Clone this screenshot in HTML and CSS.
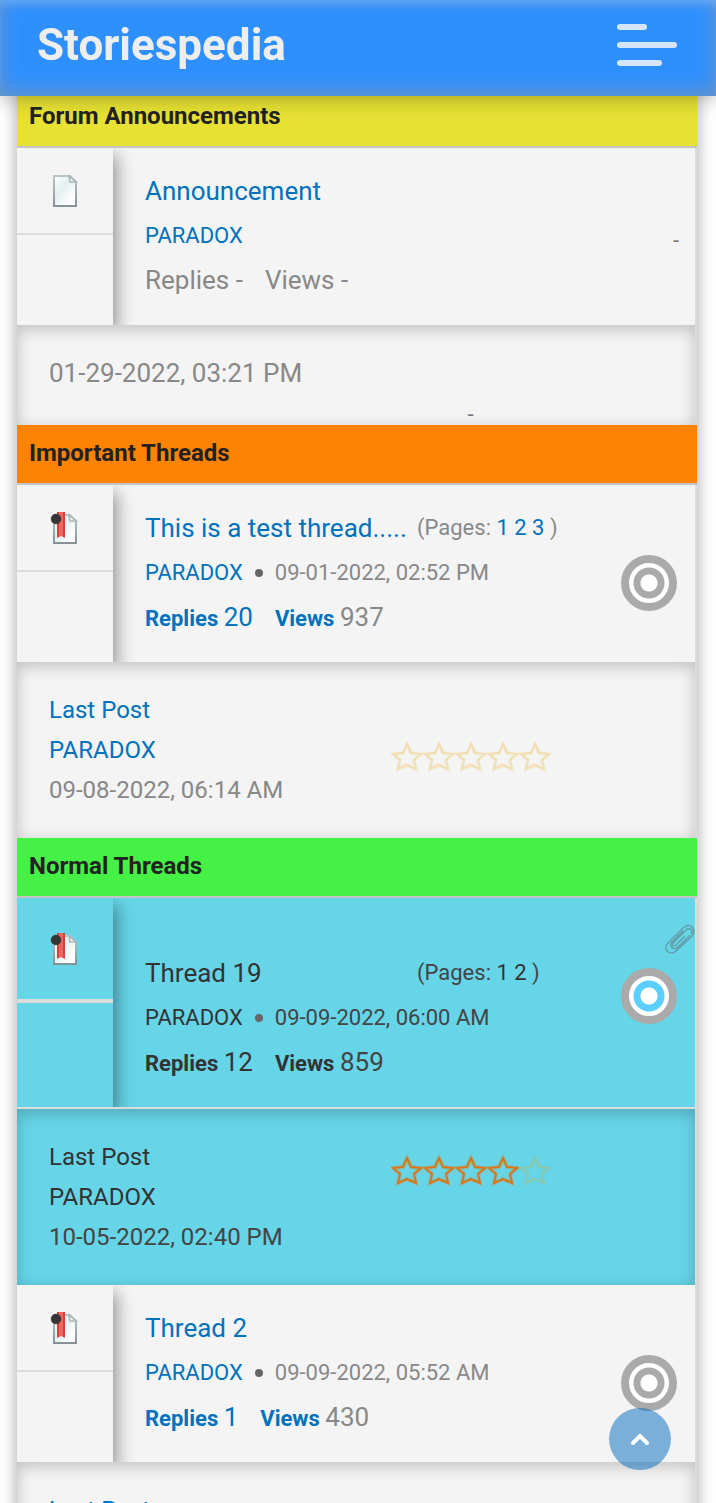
FILE: index.html
```html
<!DOCTYPE html>
<html lang="en">
<head>
    <meta charset="utf-8">
    <meta name="viewport" content="width=device-width, initial-scale=1">
    <title>Storiespedia</title>
    <link rel="stylesheet" href="styles.css">
</head>
<body>
    <svg class="sprites" aria-hidden="true">
        <defs>
            <linearGradient id="paper" x1="0" y1="0" x2="1" y2="1">
                <stop offset="0" stop-color="#ffffff"/>
                <stop offset=".4" stop-color="#e4eff0"/>
                <stop offset=".8" stop-color="#ffffff"/>
            </linearGradient>
            <linearGradient id="edge" x1="0" y1="0" x2="0" y2="1">
                <stop offset="0" stop-color="#b9c6c7"/>
                <stop offset="1" stop-color="#849496"/>
            </linearGradient>
            <symbol id="page" viewBox="0 0 32 32">
                <path d="M5 1H21L27 7V31H5Z" fill="url(#paper)" stroke="url(#edge)" stroke-width="2"/>
                <path d="M20 1L21 7H27Z" fill="#f4f8f8" stroke="#a9b7b8" stroke-width="1.6"/>
            </symbol>
            <symbol id="page-marked" viewBox="0 0 32 32">
                <path d="M5 3H21L27 9V31H5Z" fill="url(#paper)" stroke="url(#edge)" stroke-width="2"/>
                <path d="M20 3L21 9H27Z" fill="#f4f8f8" stroke="#a9b7b8" stroke-width="1.6"/>
                <path d="M8 0H16V26L12 24L8 26Z" fill="#ea6661"/>
                <path d="M9 0V25M15 0V25" stroke="#d5423e" stroke-width="2"/>
                <circle cx="7" cy="7" r="5" fill="#353535" stroke="#353535" stroke-opacity=".4"/>
            </symbol>
            <symbol id="star" viewBox="0 0 32 32">
                <path d="M16 3L20 12L30 13L23 19L25 28L16 24L7 28L9 19L2 13L12 12Z" fill="none" stroke="currentColor" stroke-width="4" stroke-opacity=".3"/>
                <path d="M16 3L20 12L30 13L23 19L25 28L16 24L7 28L9 19L2 13L12 12Z" fill="none" stroke="currentColor" stroke-width="2"/>
            </symbol>
            <symbol id="clip" viewBox="0 0 32 32">
                <path d="M20 8L9 19C5 23 11 28 15 24L27 12M22 13L13 22C11 24 8 22 10 20L23 7C26 4 31 7 28 11M20 5L5 20C-1 26 7 34 13 28L29 13C34 6 27-1 20 5Z" fill="none" stroke="currentColor" stroke-width="1.4"/>
            </symbol>
        </defs>
    </svg>

    <header class="header">
        <a class="logo" href="#">Storiespedia</a>
        <button class="menu-btn" type="button" aria-label="Menu">
            <span class="bar short"></span>
            <span class="bar"></span>
            <span class="bar medium"></span>
        </button>
    </header>

    <main class="forum">
        <h2 class="section-title announcements">Forum Announcements</h2>
        <article class="thread">
            <div class="thread-main">
                <div class="thread-side">
                    <div class="icon-cell"><svg class="file-icon"><use href="#page"/></svg></div>
                </div>
                <div class="thread-info">
                    <div class="line"><a class="subject" href="#">Announcement</a></div>
                    <div class="line meta"><a href="#">PARADOX</a></div>
                    <div class="line stats"><span class="count">Replies -</span><span class="count">Views -</span></div>
                </div>
                <span class="no-status">-</span>
            </div>
            <div class="last-post compact">
                <div class="post-date">01-29-2022, 03:21 PM</div>
                <div class="no-rating">-</div>
            </div>
        </article>

        <h2 class="section-title important">Important Threads</h2>
        <article class="thread">
            <div class="thread-main">
                <div class="thread-side">
                    <div class="icon-cell"><svg class="file-icon"><use href="#page-marked"/></svg></div>
                </div>
                <div class="thread-info">
                    <div class="line">
                        <a class="subject" href="#">This is a test thread.....</a>
                        <span class="pages">(Pages: <a href="#">1</a> <a href="#">2</a> <a href="#">3</a> )</span>
                    </div>
                    <div class="line meta"><a href="#">PARADOX</a><span class="dot"></span><span>09-01-2022, 02:52 PM</span></div>
                    <div class="line stats">
                        <a href="#"><b>Replies</b> <span class="count">20</span></a>
                        <span><a href="#"><b>Views</b></a> <span class="count">937</span></span>
                    </div>
                </div>
                <span class="status"></span>
            </div>
            <div class="last-post">
                <div>
                    <a href="#">Last Post</a><br>
                    <a href="#">PARADOX</a><br>
                    09-08-2022, 06:14 AM
                </div>
                <div class="rating">
                    <svg><use href="#star"/></svg>
                    <svg><use href="#star"/></svg>
                    <svg><use href="#star"/></svg>
                    <svg><use href="#star"/></svg>
                    <svg><use href="#star"/></svg>
                </div>
            </div>
        </article>

        <h2 class="section-title normal">Normal Threads</h2>
        <article class="thread unread">
            <div class="thread-main">
                <div class="thread-side">
                    <div class="icon-cell"><svg class="file-icon"><use href="#page-marked"/></svg></div>
                </div>
                <div class="thread-info">
                    <div class="line">
                        <a class="subject" href="#">Thread 19</a>
                        <span class="pages">(Pages: <a href="#">1</a> <a href="#">2</a> )</span>
                    </div>
                    <div class="line meta"><a href="#">PARADOX</a><span class="dot"></span><span>09-09-2022, 06:00 AM</span></div>
                    <div class="line stats">
                        <a href="#"><b>Replies</b> <span class="count">12</span></a>
                        <span><a href="#"><b>Views</b></a> <span class="count">859</span></span>
                    </div>
                </div>
                <span class="status"></span>
                <svg class="attachment"><use href="#clip"/></svg>
            </div>
            <div class="last-post">
                <div>
                    <a href="#">Last Post</a><br>
                    <a href="#">PARADOX</a><br>
                    10-05-2022, 02:40 PM
                </div>
                <div class="rating rated">
                    <svg class="on"><use href="#star"/></svg>
                    <svg class="on"><use href="#star"/></svg>
                    <svg class="on"><use href="#star"/></svg>
                    <svg class="on"><use href="#star"/></svg>
                    <svg><use href="#star"/></svg>
                </div>
            </div>
        </article>

        <article class="thread">
            <div class="thread-main">
                <div class="thread-side">
                    <div class="icon-cell"><svg class="file-icon"><use href="#page-marked"/></svg></div>
                </div>
                <div class="thread-info">
                    <div class="line"><a class="subject" href="#">Thread 2</a></div>
                    <div class="line meta"><a href="#">PARADOX</a><span class="dot"></span><span>09-09-2022, 05:52 AM</span></div>
                    <div class="line stats">
                        <a href="#"><b>Replies</b> <span class="count">1</span></a>
                        <span><a href="#"><b>Views</b></a> <span class="count">430</span></span>
                    </div>
                </div>
                <span class="status"></span>
            </div>
            <div class="last-post">
                <div>
                    <a href="#">Last Post</a>
                </div>
            </div>
        </article>
    </main>

    <button class="to-top" type="button" aria-label="Back to top">
        <svg viewBox="0 0 20 14"><path d="M3 11L10 4L17 11" fill="none" stroke="#fff" stroke-width="4" stroke-linecap="round"/></svg>
    </button>

    <script>
        document.querySelector('.to-top').addEventListener('click', function() {
            window.scrollTo({ top: 0, behavior: 'smooth' });
        });
    </script>
</body>
</html>
```
FILE: styles.css
```css
* {
    box-sizing: border-box;
}
body {
    margin: 0;
    padding-top: 88px;
    background: #fff;
    color: #888;
    font-family: Roboto, sans-serif;
    font-size: 22px;
}
a {
    color: #0072bc;
    text-decoration: none;
}
svg {
    display: block;
}
.sprites {
    position: absolute;
    width: 0;
    height: 0;
}
.header {
    position: fixed;
    top: 0;
    left: 0;
    right: 0;
    z-index: 10;
    display: flex;
    justify-content: space-between;
    align-items: center;
    height: 96px;
    padding: 0 39px 6px 37px;
    background: #2e90ff;
    box-shadow: inset 0 8px 10px -4px rgba(110, 180, 255, 0.7),
                inset 0 -4px 20px rgba(150, 150, 150, 0.6),
                0 0 20px rgba(0, 0, 0, 0.35);
}
.logo {
    color: #eee;
    font-size: 44px;
    font-weight: bold;
    line-height: 88px;
}
.menu-btn {
    display: flex;
    flex-direction: column;
    gap: 12px;
    width: 60px;
    padding: 0;
    border: none;
    background: none;
    cursor: pointer;
}
.bar {
    width: 100%;
    height: 6px;
    border-radius: 3px;
    background: #d5e6fc;
}
.bar.short {
    width: 50%;
}
.bar.medium {
    width: 75%;
}

.forum {
    margin: 0 19px 0 17px;
    background: #f4f4f4;
    box-shadow: 0 0 16px rgba(0, 0, 0, 0.35);
}
.section-title {
    margin: 0;
    padding: 0 12px 2px;
    border-bottom: 2px solid #c4c4c4;
    color: #222;
    font-size: 24px;
    line-height: 56px;
}
.announcements {
    background: #e6e133;
}
.important {
    background: #ff8303;
}
.normal {
    background: #45f145;
}

.thread {
    border-right: 2px solid #dcdcdc;
}
.thread-main {
    position: relative;
    display: flex;
    overflow: hidden;
}
.thread-side {
    flex: 0 0 96px;
    box-shadow: 4px 8px 16px rgba(0, 0, 0, 0.4);
}
.icon-cell {
    display: flex;
    justify-content: center;
    align-items: center;
    height: 87px;
    border-bottom: 2px solid #dcdcdc;
}
.file-icon {
    width: 32px;
    height: 32px;
}
.thread-info {
    flex: 1;
    padding: 20px 0 24px 32px;
}
.line {
    display: flex;
    align-items: center;
    height: 45px;
}
.subject {
    flex: 0 0 272px;
    font-size: 26px;
}
.meta {
    gap: 11px;
}
.dot {
    width: 10px;
    height: 10px;
    border: 1px solid transparent;
    border-radius: 50%;
    background: #666 padding-box;
}
.stats {
    gap: 22px;
    height: 43px;
}
.count {
    font-size: 26px;
}
.status {
    width: 56px;
    height: 56px;
    margin: 70px 18px 0 0;
    border: 8px solid #aaa;
    border-radius: 50%;
    background: radial-gradient(circle, #fff 8px, #aaa 9px, #aaa 15px, #fff 16px);
}
.no-status {
    align-self: center;
    padding: 8px 16px 0 0;
    color: #777;
}

.last-post {
    display: flex;
    padding: 28px 0 28px 32px;
    box-shadow: inset 0 4px 16px rgba(0, 0, 0, 0.22);
    font-size: 24px;
    line-height: 40px;
}
.last-post > :first-child {
    flex: 0 0 53%;
}
.compact {
    padding: 28px 0 0 32px;
    font-size: 26px;
}
.rating {
    display: flex;
    align-self: center;
    padding-top: 14px;
    color: #f1deb2;
}
.rating.rated {
    align-self: flex-start;
    padding-top: 18px;
}
.rating svg {
    width: 32px;
    height: 32px;
}
.no-rating {
    padding: 52px 0 0 76px;
    color: #777;
    font-size: 22px;
    line-height: 20px;
}

.unread .thread-main,
.unread .last-post {
    background: #66d5e8;
    color: #444;
}
.unread .thread-main {
    border-bottom: 2px solid #dcdcdc;
}
.unread a {
    color: #333;
}
.unread .icon-cell {
    height: 105px;
    border-bottom-width: 4px;
}
.unread .thread-info {
    padding-top: 52px;
}
.unread .status {
    background: radial-gradient(circle, #fff 8px, #5bcfff 9px, #5bcfff 15px, #fff 16px);
}
.unread .rating {
    color: #87c8b0;
}
.unread .rating .on {
    color: #d97717;
}
.attachment {
    position: absolute;
    top: 25px;
    right: 0;
    width: 32px;
    height: 32px;
    color: #609da7;
}

.to-top {
    position: fixed;
    right: 45px;
    bottom: 33px;
    z-index: 5;
    display: flex;
    justify-content: center;
    align-items: center;
    width: 62px;
    height: 62px;
    padding: 0;
    border: none;
    border-radius: 50%;
    background: rgba(0, 106, 190, 0.5);
    cursor: pointer;
}
.to-top svg {
    width: 20px;
    height: 14px;
}
```
